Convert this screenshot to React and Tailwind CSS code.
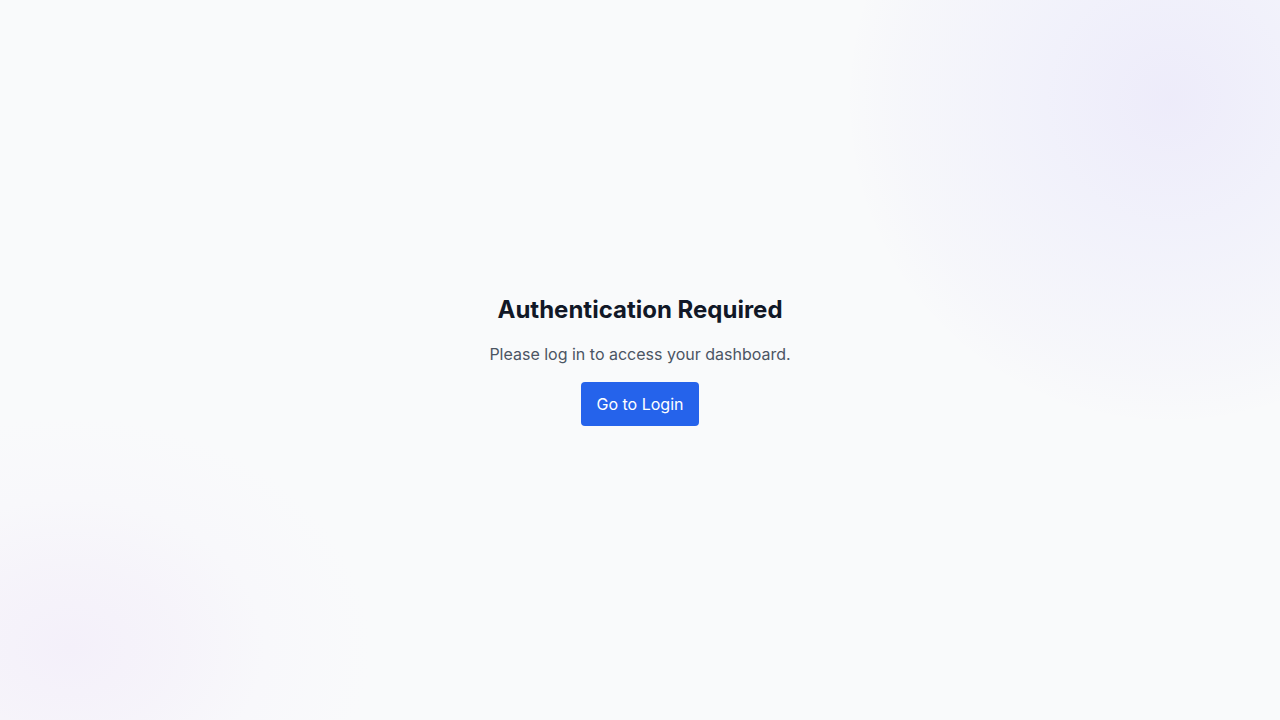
export default function App() {
  return (
    <div
      className="relative min-h-screen h-[720px] w-full overflow-hidden bg-[#f9fafb] flex items-center justify-center"
      style={{ fontFamily: "Inter, 'Noto Sans', sans-serif" }}
    >
      <div className="pointer-events-none absolute left-[850px] top-[-220px] w-[640px] h-[640px] rounded-full bg-[radial-gradient(circle,rgba(236,234,250,0.9)_0%,rgba(238,238,251,0.7)_30%,rgba(241,241,250,0.35)_60%,rgba(249,250,251,0)_72%)]" />
      <div className="pointer-events-none absolute left-[-230px] top-[418px] w-[600px] h-[460px] rounded-full bg-[radial-gradient(closest-side,rgba(244,240,250,1)_0%,rgba(245,242,250,0.8)_35%,rgba(247,246,251,0.5)_65%,rgba(249,250,251,0)_100%)]" />
      <div className="relative flex flex-col items-center text-center">
        <h1 className="text-2xl font-bold text-[#111827] mb-4">Authentication Required</h1>
        <p className="text-base text-[#4b5563] mb-4">Please log in to access your dashboard.</p>
        <button className="bg-[#2563eb] text-white px-4 py-2.5 rounded text-base">Go to Login</button>
      </div>
    </div>
  );
}
